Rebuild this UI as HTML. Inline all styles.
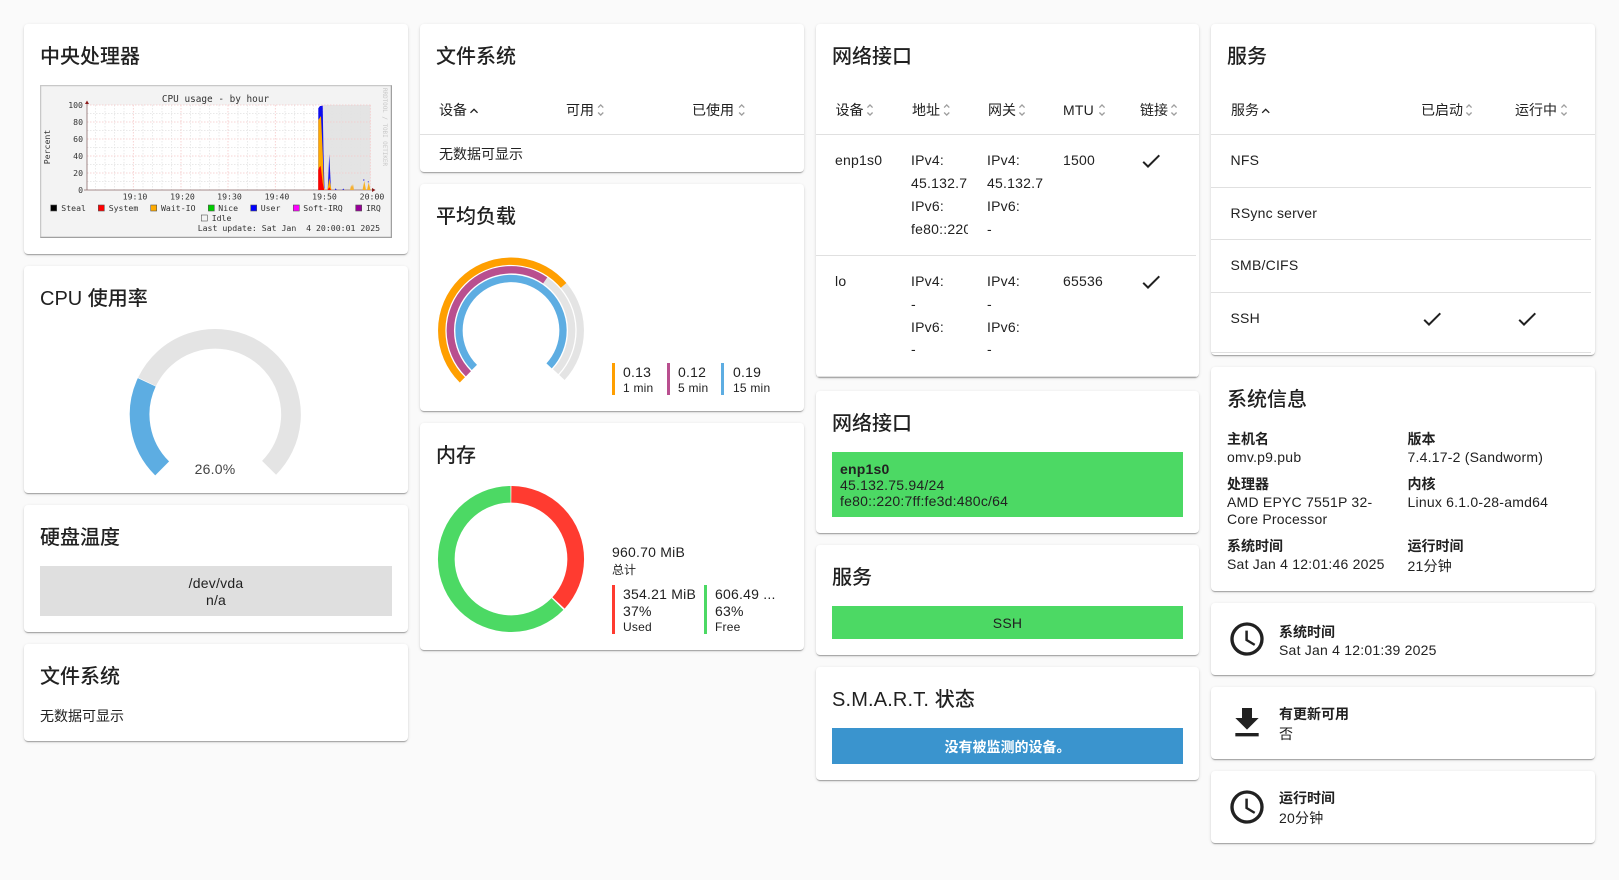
<!DOCTYPE html>
<html><head><meta charset="utf-8"><title>Dashboard</title>
<style>
html,body{margin:0;padding:0;width:1619px;height:880px;overflow:hidden;background:#fafafa}
body{position:relative;font-family:"Liberation Sans","Noto Sans CJK SC",sans-serif;color:#212121;font-size:14px}
.c{position:absolute;background:#fff;border-radius:4px;box-shadow:0 2px 1px -1px rgba(0,0,0,.2),0 1px 1px 0 rgba(0,0,0,.14),0 1px 3px 0 rgba(0,0,0,.12)}
.h{position:absolute;font-size:20px;font-weight:500;line-height:30px;white-space:nowrap}
.t{position:absolute;line-height:20px;white-space:nowrap;letter-spacing:.22px}
.z{letter-spacing:0}
.s{font-size:12px}
.b{font-weight:700}
.l{position:absolute;height:1px;background:#e0e0e0}
.x{position:absolute}
.cl{overflow:hidden}
.cn{text-align:center}
svg.o{position:absolute;left:0;top:0}
</style></head><body>

<div class="c" style="left:24px;top:24px;width:384px;height:230px"></div>
<div class="c" style="left:24px;top:266px;width:384px;height:227px"></div>
<div class="c" style="left:24px;top:505px;width:384px;height:127px"></div>
<div class="c" style="left:24px;top:644px;width:384px;height:97px"></div>
<div class="c" style="left:420px;top:24px;width:384px;height:148px"></div>
<div class="c" style="left:420px;top:184px;width:384px;height:227px"></div>
<div class="c" style="left:420px;top:423px;width:384px;height:227px"></div>
<div class="c" style="left:816px;top:24px;width:383px;height:353px"></div>
<div class="c" style="left:816px;top:391px;width:383px;height:142px"></div>
<div class="c" style="left:816px;top:545px;width:383px;height:110px"></div>
<div class="c" style="left:816px;top:667px;width:383px;height:113px"></div>
<div class="c" style="left:1211px;top:24px;width:384px;height:331px"></div>
<div class="c" style="left:1211px;top:367px;width:384px;height:224px"></div>
<div class="c" style="left:1211px;top:603px;width:384px;height:72px"></div>
<div class="c" style="left:1211px;top:687px;width:384px;height:72px"></div>
<div class="c" style="left:1211px;top:771px;width:384px;height:72px"></div>

<div class="x" style="left:40px;top:566px;width:352px;height:50px;background:#dfdfdf"></div>
<div class="x" style="left:832px;top:452px;width:351px;height:65px;background:#4cd964"></div>
<div class="x" style="left:832px;top:606px;width:351px;height:33px;background:#4cd964"></div>
<div class="x" style="left:832px;top:728px;width:351px;height:36px;background:#3a94ce"></div>

<div class="l" style="left:420px;top:134px;width:384px"></div>
<div class="l" style="left:816px;top:134px;width:383px"></div>
<div class="l" style="left:816px;top:255px;width:380px"></div>
<div class="l" style="left:816px;top:376px;width:380px"></div>
<div class="l" style="left:1211px;top:134px;width:384px"></div>
<div class="l" style="left:1211px;top:187px;width:380px"></div>
<div class="l" style="left:1211px;top:239px;width:380px"></div>
<div class="l" style="left:1211px;top:292px;width:380px"></div>
<div class="l" style="left:1211px;top:352px;width:380px"></div>

<div class="x" style="left:612px;top:363px;width:3px;height:32px;background:#ff9f00"></div>
<div class="x" style="left:667px;top:363px;width:3px;height:32px;background:#b94f8f"></div>
<div class="x" style="left:721px;top:363px;width:3px;height:32px;background:#5dade2"></div>
<div class="x" style="left:612px;top:585px;width:3px;height:49px;background:#ff3b30"></div>
<div class="x" style="left:704px;top:585px;width:3px;height:49px;background:#4cd964"></div>

<svg class="o" width="1619" height="880" viewBox="0 0 1619 880" xmlns="http://www.w3.org/2000/svg">
<filter id="bl" x="0" y="0" width="100%" height="100%"><feGaussianBlur stdDeviation="0.25"/></filter>
<g filter="url(#bl)">
<rect x="40" y="85" width="352" height="153" fill="#f3f3f3"/>
<path d="M40.500 238V85.500H392" fill="none" stroke="#c8c8c8" stroke-width="1.500"/>
<path d="M391.500 85.500V237.500H40.500" fill="none" stroke="#a0a0a0" stroke-width="1.500"/>
<rect x="87" y="105" width="284" height="85" fill="#fff"/>
<rect x="322.700" y="105" width="48" height="85" fill="#e4e4e4"/>
<path d="M87 181.500H371M87 164.500H371M87 147.500H371M87 130.500H371M87 113.500H371M95.500 105V190M105 105V190M114.500 105V190M124 105V190M143 105V190M152.500 105V190M162 105V190M171.500 105V190M190.500 105V190M200 105V190M209.500 105V190M219 105V190M238 105V190M247.500 105V190M257 105V190M266 105V190M285 105V190M294.500 105V190M304 105V190M313.500 105V190M332 105V190M341.500 105V190M351 105V190M360.500 105V190" stroke="#e2e2e2" stroke-width=".7" stroke-dasharray="1.500 1.500" fill="none"/>
<path d="M87 173H371M87 156H371M87 139H371M87 122H371M87 105H371M133.300 105V190M181 105V190M228 105V190M275.300 105V190M322.700 105V190M370.300 105V190" stroke="#f5c8c8" stroke-width=".8" stroke-dasharray="1.500 1.500" fill="none"/>
<path d="M87 102V190M84 190H374" stroke="#8a6a6a" stroke-width=".8" fill="none"/>
<path d="M87 100.500L85 104H89ZM375.500 190L372 188V192Z" fill="#8c1a1a"/>
<path d="M318.300 190V108.300L320 106L322.700 105.700L323.500 152L324.500 190Z" fill="#0a0aee"/>
<path d="M318.300 190V120L321 116L322.700 152L324 188L325 190Z" fill="#ffab00"/>
<path d="M318.300 190V170L319.300 167.300L320.700 166L322.700 183L324 189V190Z" fill="#f00"/>
<path d="M327.700 190L329.300 154L331 190Z" fill="#1a1ae8"/>
<path d="M327.500 190L329.300 178L331.500 190Z" fill="#ffab00"/>
<path d="M327.500 190L329.300 187.300L331 190Z" fill="#f00"/>
<path d="M334.700 190L335.700 188.300L336.700 190ZM342.300 190L343.300 188.500L344.300 190Z" fill="#2020e0"/>
<path d="M350 190L351.200 185L352 187L353 184L354 190Z" fill="#f5b030"/>
<path d="M362.500 190L364.300 181L366 190ZM367 190L368.700 182.500L370.500 190Z" fill="#f7b020"/>
<path d="M363.800 181V179M368.300 182.500V181" stroke="#6060e0" stroke-width="1"/>
<g font-family="'DejaVu Sans Mono','Liberation Mono',monospace" font-size="8.200" fill="#333">
<text x="215.500" y="102" text-anchor="middle" font-size="9.400">CPU usage - by hour</text>
<g text-anchor="end"><text x="83" y="108">100</text><text x="83" y="125">80</text><text x="83" y="142">60</text><text x="83" y="159">40</text><text x="83" y="176">20</text><text x="83" y="193">0</text></g>
<g text-anchor="middle"><text x="135" y="199.500">19:10</text><text x="182.500" y="199.500">19:20</text><text x="229.500" y="199.500">19:30</text><text x="277" y="199.500">19:40</text><text x="324.500" y="199.500">19:50</text><text x="372" y="199.500">20:00</text></g>
<text transform="translate(50 147) rotate(-90)" text-anchor="middle">Percent</text>
<text x="61.300" y="211">Steal</text><text x="108.700" y="211">System</text><text x="161" y="211">Wait-IO</text><text x="218.300" y="211">Nice</text><text x="260.700" y="211">User</text><text x="303.300" y="211">Soft-IRQ</text><text x="366" y="211">IRQ</text>
<text x="211.700" y="221">Idle</text>
<text x="197.700" y="231">Last update: Sat Jan &#160;4 20:00:01 2025</text>
<text transform="translate(383 88) rotate(90)" font-size="6.200" fill="#c8c8c8" textLength="78" lengthAdjust="spacingAndGlyphs">RRDTOOL / TOBI OETIKER</text>
</g>
<g stroke="#555" stroke-width=".6">
<rect x="50.700" y="205" width="6" height="6" fill="#000"/><rect x="98.300" y="205" width="6" height="6" fill="#f00"/><rect x="150.700" y="205" width="6" height="6" fill="#ffab00"/><rect x="208.300" y="205" width="6" height="6" fill="#0c0"/><rect x="250.700" y="205" width="6" height="6" fill="#00f"/><rect x="293.300" y="205" width="6" height="6" fill="#f0f"/><rect x="355.700" y="205" width="6" height="6" fill="#909"/><rect x="201.300" y="215" width="6" height="6" fill="#f3f3f3"/>
</g>
</g>

<g fill="none" stroke-width="19.700">
<circle cx="215.300" cy="414.500" r="75.700" pathLength="360" stroke="#5dade2" stroke-dasharray="70.200 289.800" transform="rotate(135 215.300 414.500)"/>
<circle cx="215.300" cy="414.500" r="75.700" pathLength="360" stroke="#e4e4e4" stroke-dasharray="199 161" transform="rotate(206 215.300 414.500)"/>
</g>

<g fill="none" stroke-width="7.300">
<circle cx="511" cy="330.500" r="69.300" pathLength="360" stroke="#e4e4e4" stroke-dasharray="268 92" transform="rotate(135 511 330.500)"/>
<circle cx="511" cy="330.500" r="69.300" pathLength="360" stroke="#ff9f00" stroke-dasharray="184.600 175.400" transform="rotate(135 511 330.500)"/>
<circle cx="511" cy="330.500" r="60.700" pathLength="360" stroke="#e4e4e4" stroke-dasharray="268 92" transform="rotate(135 511 330.500)"/>
<circle cx="511" cy="330.500" r="60.700" pathLength="360" stroke="#b94f8f" stroke-dasharray="169.500 190.500" transform="rotate(135 511 330.500)"/>
<circle cx="511" cy="330.500" r="52" pathLength="360" stroke="#5dade2" stroke-dasharray="268 92" transform="rotate(135 511 330.500)"/>
</g>

<g fill="none" stroke-width="16.700">
<circle cx="511" cy="559" r="64.700" pathLength="360" stroke="#ff3b30" stroke-dasharray="132.200 227.800" transform="rotate(-89.300 511 559)"/>
<circle cx="511" cy="559" r="64.700" pathLength="360" stroke="#4cd964" stroke-dasharray="225.400 134.600" transform="rotate(44.500 511 559)"/>
</g>

<g fill="#9e9e9e">
<path transform="translate(592.700 102) scale(.667)" d="M12,18.170L8.830,15L7.410,16.410L12,21L16.590,16.410L15.170,15M12,5.830L15.170,9L16.590,7.590L12,3L7.410,7.590L8.830,9L12,5.830Z"/>
<path transform="translate(733.700 102) scale(.667)" d="M12,18.170L8.830,15L7.410,16.410L12,21L16.590,16.410L15.170,15M12,5.830L15.170,9L16.590,7.590L12,3L7.410,7.590L8.830,9L12,5.830Z"/>
<path transform="translate(862 102) scale(.667)" d="M12,18.170L8.830,15L7.410,16.410L12,21L16.590,16.410L15.170,15M12,5.830L15.170,9L16.590,7.590L12,3L7.410,7.590L8.830,9L12,5.830Z"/>
<path transform="translate(938.700 102) scale(.667)" d="M12,18.170L8.830,15L7.410,16.410L12,21L16.590,16.410L15.170,15M12,5.830L15.170,9L16.590,7.590L12,3L7.410,7.590L8.830,9L12,5.830Z"/>
<path transform="translate(1014 102) scale(.667)" d="M12,18.170L8.830,15L7.410,16.410L12,21L16.590,16.410L15.170,15M12,5.830L15.170,9L16.590,7.590L12,3L7.410,7.590L8.830,9L12,5.830Z"/>
<path transform="translate(1094 102) scale(.667)" d="M12,18.170L8.830,15L7.410,16.410L12,21L16.590,16.410L15.170,15M12,5.830L15.170,9L16.590,7.590L12,3L7.410,7.590L8.830,9L12,5.830Z"/>
<path transform="translate(1166 102) scale(.667)" d="M12,18.170L8.830,15L7.410,16.410L12,21L16.590,16.410L15.170,15M12,5.830L15.170,9L16.590,7.590L12,3L7.410,7.590L8.830,9L12,5.830Z"/>
<path transform="translate(1461 102) scale(.667)" d="M12,18.170L8.830,15L7.410,16.410L12,21L16.590,16.410L15.170,15M12,5.830L15.170,9L16.590,7.590L12,3L7.410,7.590L8.830,9L12,5.830Z"/>
<path transform="translate(1556 102) scale(.667)" d="M12,18.170L8.830,15L7.410,16.410L12,21L16.590,16.410L15.170,15M12,5.830L15.170,9L16.590,7.590L12,3L7.410,7.590L8.830,9L12,5.830Z"/>
</g>
<g fill="#212121">
<path transform="translate(466 103) scale(.667)" d="M7.410,15.410L12,10.830L16.590,15.410L18,14L12,8L6,14L7.410,15.410Z"/>
<path transform="translate(1257.700 103) scale(.667)" d="M7.410,15.410L12,10.830L16.590,15.410L18,14L12,8L6,14L7.410,15.410Z"/>
<path transform="translate(1139 149)" d="M21,7L9,19L3.500,13.500L4.910,12.090L9,16.170L19.590,5.590L21,7Z"/>
<path transform="translate(1139 270)" d="M21,7L9,19L3.500,13.500L4.910,12.090L9,16.170L19.590,5.590L21,7Z"/>
<path transform="translate(1420 307)" d="M21,7L9,19L3.500,13.500L4.910,12.090L9,16.170L19.590,5.590L21,7Z"/>
<path transform="translate(1515 307)" d="M21,7L9,19L3.500,13.500L4.910,12.090L9,16.170L19.590,5.590L21,7Z"/>
<path transform="translate(1227 619) scale(1.667)" d="M12,20A8,8 0 0,0 20,12A8,8 0 0,0 12,4A8,8 0 0,0 4,12A8,8 0 0,0 12,20M12,2A10,10 0 0,1 22,12A10,10 0 0,1 12,22C6.470,22 2,17.500 2,12A10,10 0 0,1 12,2M12.500,7V12.250L17,14.920L16.250,16.150L11,13V7H12.500Z"/>
<path transform="translate(1227 787) scale(1.667)" d="M12,20A8,8 0 0,0 20,12A8,8 0 0,0 12,4A8,8 0 0,0 4,12A8,8 0 0,0 12,20M12,2A10,10 0 0,1 22,12A10,10 0 0,1 12,22C6.470,22 2,17.500 2,12A10,10 0 0,1 12,2M12.500,7V12.250L17,14.920L16.250,16.150L11,13V7H12.500Z"/>
<path transform="translate(1227 703) scale(1.667)" d="M5,20H19V18H5M19,9H15V3H9V9H5L12,16L19,9Z"/>
</g>
</svg>

<div class="h" style="left:40px;top:42px">中央处理器</div>
<div class="h" style="left:40px;top:284px">CPU 使用率</div>
<div class="h" style="left:40px;top:523px">硬盘温度</div>
<div class="h" style="left:40px;top:662px">文件系统</div>
<div class="t cn" style="left:115px;top:459px;width:200px;color:#444">26.0%</div>
<div class="t cn" style="left:40px;top:575px;width:352px;line-height:17px;height:17px">/dev/vda</div>
<div class="t cn" style="left:40px;top:592px;width:352px;line-height:17px;height:17px">n/a</div>
<div class="t z" style="left:40px;top:706px">无数据可显示</div>

<div class="h" style="left:436px;top:42px">文件系统</div>
<div class="t z" style="left:439px;top:100px">设备</div>
<div class="t z" style="left:566px;top:100px">可用</div>
<div class="t z" style="left:692px;top:100px">已使用</div>
<div class="t z" style="left:439px;top:144px">无数据可显示</div>
<div class="h" style="left:436px;top:202px">平均负载</div>
<div class="t" style="left:623px;top:362px">0.13</div>
<div class="t s" style="left:623px;top:378px">1 min</div>
<div class="t" style="left:678px;top:362px">0.12</div>
<div class="t s" style="left:678px;top:378px">5 min</div>
<div class="t" style="left:733px;top:362px">0.19</div>
<div class="t s" style="left:733px;top:378px">15 min</div>
<div class="h" style="left:436px;top:441px">内存</div>
<div class="t" style="left:612px;top:542px">960.70 MiB</div>
<div class="t s z" style="left:612px;top:560px">总计</div>
<div class="t" style="left:623px;top:584px">354.21 MiB</div>
<div class="t" style="left:623px;top:601px">37%</div>
<div class="t s" style="left:623px;top:617px">Used</div>
<div class="t" style="left:715px;top:584px">606.49 ...</div>
<div class="t" style="left:715px;top:601px">63%</div>
<div class="t s" style="left:715px;top:617px">Free</div>

<div class="h" style="left:832px;top:42px">网络接口</div>
<div class="t z" style="left:835.500px;top:100px">设备</div>
<div class="t z" style="left:912px;top:100px">地址</div>
<div class="t z" style="left:988px;top:100px">网关</div>
<div class="t" style="left:1063px;top:100px">MTU</div>
<div class="t z" style="left:1140px;top:100px">链接</div>
<div class="t" style="left:835px;top:150px">enp1s0</div>
<div class="t" style="left:911px;top:150px">IPv4:</div>
<div class="t cl" style="left:911px;top:173px;width:57px">45.132.75.94/24</div>
<div class="t" style="left:911px;top:196px">IPv6:</div>
<div class="t cl" style="left:911px;top:219px;width:57px">fe80::220:7ff:fe3d:480c/64</div>
<div class="t" style="left:987px;top:150px">IPv4:</div>
<div class="t cl" style="left:987px;top:173px;width:56px">45.132.75.1</div>
<div class="t" style="left:987px;top:196px">IPv6:</div>
<div class="t" style="left:987px;top:219px">-</div>
<div class="t" style="left:1063px;top:150px">1500</div>
<div class="t" style="left:835px;top:271px">lo</div>
<div class="t" style="left:911px;top:271px">IPv4:</div>
<div class="t" style="left:911px;top:294px">-</div>
<div class="t" style="left:911px;top:317px">IPv6:</div>
<div class="t" style="left:911px;top:339px">-</div>
<div class="t" style="left:987px;top:271px">IPv4:</div>
<div class="t" style="left:987px;top:294px">-</div>
<div class="t" style="left:987px;top:317px">IPv6:</div>
<div class="t" style="left:987px;top:339px">-</div>
<div class="t" style="left:1063px;top:271px">65536</div>

<div class="h" style="left:832px;top:409px">网络接口</div>
<div class="t b" style="left:840px;top:459px">enp1s0</div>
<div class="t" style="left:840px;top:475px">45.132.75.94/24</div>
<div class="t" style="left:840px;top:491px">fe80::220:7ff:fe3d:480c/64</div>
<div class="h" style="left:832px;top:563px">服务</div>
<div class="t cn" style="left:832px;top:613px;width:351px">SSH</div>
<div class="h" style="left:832px;top:685px;letter-spacing:.15px">S.M.A.R.T. 状态</div>
<div class="t cn z" style="left:832px;top:737px;width:351px;color:#fff;font-weight:700">没有被监测的设备。</div>

<div class="h" style="left:1227px;top:42px">服务</div>
<div class="t z" style="left:1231px;top:100px">服务</div>
<div class="t z" style="left:1421px;top:100px">已启动</div>
<div class="t z" style="left:1515px;top:100px">运行中</div>
<div class="t" style="left:1230.500px;top:150px">NFS</div>
<div class="t" style="left:1230.500px;top:203px">RSync server</div>
<div class="t" style="left:1230.500px;top:255px">SMB/CIFS</div>
<div class="t" style="left:1230.500px;top:308px">SSH</div>

<div class="h" style="left:1227px;top:385px">系统信息</div>
<div class="t b z" style="left:1227px;top:429px">主机名</div>
<div class="t" style="left:1227px;top:447px">omv.p9.pub</div>
<div class="t b z" style="left:1227px;top:474px">处理器</div>
<div class="t" style="left:1227px;top:492px">AMD EPYC 7551P 32-</div>
<div class="t" style="left:1227px;top:509px">Core Processor</div>
<div class="t b z" style="left:1227px;top:536px">系统时间</div>
<div class="t" style="left:1227px;top:554px">Sat Jan 4 12:01:46 2025</div>
<div class="t b z" style="left:1407.500px;top:429px">版本</div>
<div class="t" style="left:1407.500px;top:447px">7.4.17-2 (Sandworm)</div>
<div class="t b z" style="left:1407.500px;top:474px">内核</div>
<div class="t" style="left:1407.500px;top:492px">Linux 6.1.0-28-amd64</div>
<div class="t b z" style="left:1407.500px;top:536px">运行时间</div>
<div class="t" style="left:1407.500px;top:556px">21分钟</div>

<div class="t b z" style="left:1279px;top:622px">系统时间</div>
<div class="t" style="left:1279px;top:640px">Sat Jan 4 12:01:39 2025</div>
<div class="t b z" style="left:1279px;top:704px">有更新可用</div>
<div class="t z" style="left:1279px;top:724px">否</div>
<div class="t b z" style="left:1279px;top:788px">运行时间</div>
<div class="t" style="left:1279px;top:808px">20分钟</div>
</body></html>
